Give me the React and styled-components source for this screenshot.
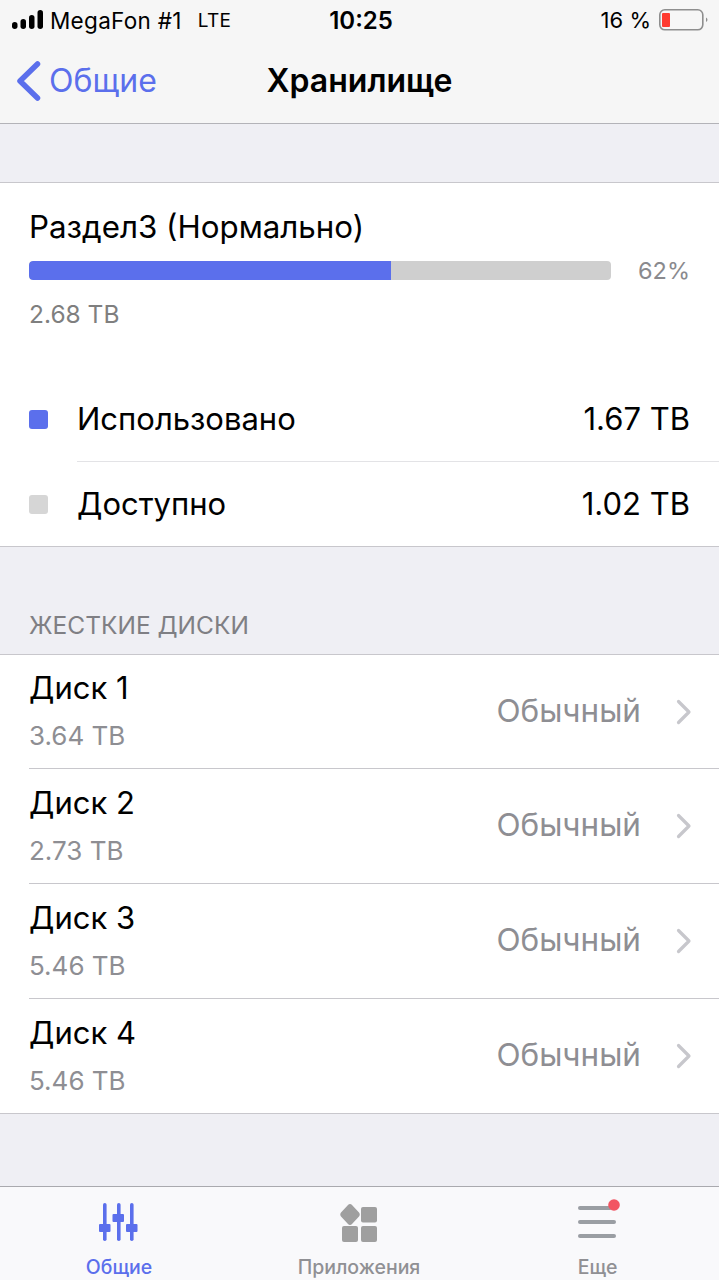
import styled, { createGlobalStyle } from 'styled-components';

const GlobalStyle = createGlobalStyle`
  * { box-sizing: border-box; }
  html, body { margin: 0; padding: 0; }
  body {
    background: #efeff4;
    font-family: Inter, "Noto Sans", "Liberation Sans", sans-serif;
  }
`;

const disks = [
  { name: 'Диск 1', size: '3.64 TB' },
  { name: 'Диск 2', size: '2.73 TB' },
  { name: 'Диск 3', size: '5.46 TB' },
  { name: 'Диск 4', size: '5.46 TB' },
];

const legend = [
  { label: 'Использовано', value: '1.67 TB', color: '#5b6fec' },
  { label: 'Доступно', value: '1.02 TB', color: '#d6d6d6' },
];

export default function App() {
  return (
    <Screen>
      <GlobalStyle />
      <TopBar>
        <StatusBar>
          <StatusLeft>
            <SignalIcon />
            <span>MegaFon #1</span>
            <Lte>LTE</Lte>
          </StatusLeft>
          <Clock>10:25</Clock>
          <StatusRight>
            <span>16 %</span>
            <BatteryIcon />
          </StatusRight>
        </StatusBar>
        <NavBar>
          <BackLink>
            <svg width="26" height="42" viewBox="0 0 26 42">
              <path d="M21.5 4 L4 21 L21.5 38" fill="none" stroke="#5b6fec" strokeWidth="5.5" strokeLinecap="round" strokeLinejoin="round" />
            </svg>
            <span>Общие</span>
          </BackLink>
          <NavTitle>Хранилище</NavTitle>
        </NavBar>
      </TopBar>

      <Spacer />

      <Card>
        <VolumeName>Раздел3 (Нормально)</VolumeName>
        <UsageRow>
          <Track>
            <Fill style={{ width: '62.2%' }} />
          </Track>
          <Percent>62%</Percent>
        </UsageRow>
        <VolumeSize>2.68 TB</VolumeSize>
        <Legend>
          {legend.map((item) => (
            <LegendRow key={item.label}>
              <Swatch $color={item.color} />
              <LegendBody>
                <span>{item.label}</span>
                <span>{item.value}</span>
              </LegendBody>
            </LegendRow>
          ))}
        </Legend>
      </Card>

      <SectionHeader>ЖЕСТКИЕ ДИСКИ</SectionHeader>

      <DiskList>
        {disks.map((disk) => (
          <DiskRow key={disk.name}>
            <DiskBody>
              <DiskText>
                <DiskName>{disk.name}</DiskName>
                <DiskSize>{disk.size}</DiskSize>
              </DiskText>
              <DiskStatus>Обычный</DiskStatus>
              <svg width="16" height="26" viewBox="0 0 16 26">
                <path d="M2.5 2.5 L13 13 L2.5 23.5" fill="none" stroke="#c7c7cc" strokeWidth="3.2" strokeLinecap="round" strokeLinejoin="round" />
              </svg>
            </DiskBody>
          </DiskRow>
        ))}
      </DiskList>

      <Filler />

      <TabBar>
        <Tab $active>
          <SlidersIcon />
          <TabLabel>Общие</TabLabel>
        </Tab>
        <Tab>
          <AppsIcon />
          <TabLabel>Приложения</TabLabel>
        </Tab>
        <Tab>
          <MenuIcon />
          <TabLabel>Еще</TabLabel>
        </Tab>
      </TabBar>
    </Screen>
  );
}

function SignalIcon() {
  return (
    <svg width="31" height="20" viewBox="0 0 31 20">
      <rect x="0" y="12" width="5.5" height="7" rx="2.75" fill="#000" />
      <rect x="8.5" y="9" width="5.5" height="10" rx="2.75" fill="#000" />
      <rect x="17" y="5" width="5.5" height="14" rx="2.75" fill="#000" />
      <rect x="25.5" y="0" width="5.5" height="19" rx="2.75" fill="#000" />
    </svg>
  );
}

function BatteryIcon() {
  return (
    <svg width="50" height="22" viewBox="0 0 50 22">
      <rect x="0.8" y="0.8" width="43" height="20" rx="5" fill="none" stroke="#8e8e8e" strokeWidth="1.6" />
      <rect x="3" y="4" width="8" height="14" rx="1" fill="#ff3b30" />
      <path d="M47 8.5 C49 9.5 49 12 47 13 Z" fill="#8e8e8e" />
    </svg>
  );
}

function SlidersIcon() {
  const color = '#5b6fec';
  return (
    <svg width="40" height="40" viewBox="0 0 40 40">
      <rect x="4" y="1" width="3.6" height="38" rx="1.8" fill={color} />
      <rect x="18" y="1" width="3.6" height="38" rx="1.8" fill={color} />
      <rect x="31" y="1" width="3.6" height="38" rx="1.8" fill={color} />
      <rect x="0" y="22" width="11.5" height="8" rx="1" fill={color} />
      <rect x="13.5" y="12" width="11.5" height="8" rx="1" fill={color} />
      <rect x="27" y="22" width="11.5" height="8" rx="1" fill={color} />
    </svg>
  );
}

function AppsIcon() {
  return (
    <svg width="40" height="40" viewBox="0 0 40 40">
      <path d="M11 2 C11.8 2 12.4 2.5 13 3.1 L20 10.6 C21 11.7 21 13.3 20 14.4 L13 22 C11.9 23.2 10.1 23.2 9 22 L2 14.4 C1 13.3 1 11.7 2 10.6 L9 3.1 C9.6 2.5 10.2 2 11 2 Z" fill="#9f9f9f" />
      <rect x="22" y="5" width="16" height="15.5" rx="2" fill="#9f9f9f" />
      <rect x="3" y="24" width="16" height="16" rx="2" fill="#9f9f9f" />
      <rect x="22" y="24" width="16" height="16" rx="2" fill="#9f9f9f" />
    </svg>
  );
}

function MenuIcon() {
  return (
    <svg width="42" height="40" viewBox="0 0 42 40" overflow="visible">
      <rect x="1" y="4" width="34" height="4" rx="2" fill="#9a9ea3" />
      <rect x="1" y="18" width="38" height="4" rx="2" fill="#9a9ea3" />
      <rect x="1" y="32" width="38" height="4" rx="2" fill="#9a9ea3" />
      <circle cx="37" cy="3" r="5.8" fill="#f25562" />
    </svg>
  );
}

const Screen = styled.div`
  width: 719px;
  height: 1280px;
  display: flex;
  flex-direction: column;
  overflow: hidden;
  background: #efeff4;
  color: #000;
`;

const TopBar = styled.header`
  height: 124px;
  background: #f6f6f6;
  border-bottom: 1px solid #b3b3b8;
`;

const StatusBar = styled.div`
  height: 40px;
  padding: 0 10px 0 12px;
  display: grid;
  grid-template-columns: 1fr auto 1fr;
  align-items: center;
  font-size: 22px;
`;

const StatusLeft = styled.div`
  display: flex;
  align-items: center;
  gap: 7px;
  font-size: 22.5px;
  letter-spacing: 0.3px;
`;

const Lte = styled.span`
  margin-left: 9px;
  font-size: 19px;
`;

const Clock = styled.div`
  margin-left: 1px;
  font-weight: 600;
  font-size: 24px;
`;

const StatusRight = styled.div`
  display: flex;
  align-items: center;
  justify-content: flex-end;
  gap: 8px;
`;

const NavBar = styled.nav`
  height: 83px;
  padding-bottom: 2px;
  display: grid;
  grid-template-columns: 1fr auto 1fr;
  align-items: center;
`;

const BackLink = styled.div`
  display: flex;
  align-items: center;
  gap: 7px;
  padding-left: 16px;
  color: #5b6fec;
  font-size: 32px;
`;

const NavTitle = styled.div`
  font-size: 32px;
  font-weight: 600;
`;

const Spacer = styled.div`
  height: 58px;
`;

const Card = styled.section`
  height: 365px;
  padding: 24px 29px 0;
  background: #fff;
  border-top: 1px solid #c8c7cc;
  border-bottom: 1px solid #c8c7cc;
`;

const VolumeName = styled.div`
  font-size: 31.3px;
  line-height: 40px;
`;

const UsageRow = styled.div`
  margin-top: 9px;
  display: flex;
  align-items: center;
  justify-content: space-between;
`;

const Track = styled.div`
  width: 582px;
  height: 19px;
  border-radius: 4px;
  background: #cfcfcf;
  overflow: hidden;
`;

const Fill = styled.div`
  height: 100%;
  border-radius: 4px 0 0 4px;
  background: #5b6fec;
`;

const Percent = styled.div`
  font-size: 23.5px;
  color: #8a8a8e;
`;

const VolumeSize = styled.div`
  margin-top: 14px;
  font-size: 24.5px;
  line-height: 30px;
  color: #7f7f7f;
`;

const Legend = styled.div`
  margin-top: 48px;
  margin-right: -29px;
`;

const LegendRow = styled.div`
  height: 85px;
  display: flex;
  align-items: center;
  font-size: 31px;

  &:last-child {
    height: 84px;
  }
`;

const Swatch = styled.div`
  width: 19px;
  height: 19px;
  border-radius: 3px;
  flex-shrink: 0;
  background: ${(props) => props.$color};
`;

const LegendBody = styled.div`
  flex: 1;
  height: 100%;
  margin-left: 29px;
  padding-right: 29px;
  padding-bottom: 2px;
  display: flex;
  align-items: center;
  justify-content: space-between;

  ${LegendRow}:first-child & {
    border-bottom: 1px solid #e3e3e6;
  }
`;

const SectionHeader = styled.div`
  height: 107px;
  padding: 62px 29px 0;
  font-size: 24.5px;
  line-height: 32px;
  color: #7f7f84;
`;

const DiskList = styled.section`
  background: #fff;
  border-top: 1px solid #c8c7cc;
  border-bottom: 1px solid #c8c7cc;
`;

const DiskRow = styled.div`
  height: 115px;
  padding-left: 29px;

  &:first-child,
  &:last-child {
    height: 114px;
  }
`;

const DiskBody = styled.div`
  height: 100%;
  padding-right: 27px;
  display: flex;
  align-items: center;
  border-bottom: 1px solid #c8c7cc;

  ${DiskRow}:last-child & {
    border-bottom: 0;
  }
`;

const DiskText = styled.div`
  flex: 1;
  padding-bottom: 3px;
`;

const DiskName = styled.div`
  font-size: 31px;
  line-height: 38px;
`;

const DiskSize = styled.div`
  margin-top: 14px;
  font-size: 26px;
  line-height: 30px;
  color: #8e8e93;
`;

const DiskStatus = styled.div`
  margin-right: 35px;
  padding-bottom: 3px;
  font-size: 31.5px;
  color: #8e8e93;
`;

const Filler = styled.div`
  flex: 1;
`;

const TabBar = styled.nav`
  height: 94px;
  display: grid;
  grid-template-columns: 238px 242px 235px;
  background: #f9f9fb;
  border-top: 1px solid #a9a9ae;
`;

const TabLabel = styled.span`
  font-size: 19.5px;
  font-weight: 500;
  line-height: 24px;
`;

const Tab = styled.div`
  padding-top: 15px;
  display: flex;
  flex-direction: column;
  align-items: center;
  gap: 13px;
  color: ${(props) => (props.$active ? '#5b6fec' : '#909094')};
`;
